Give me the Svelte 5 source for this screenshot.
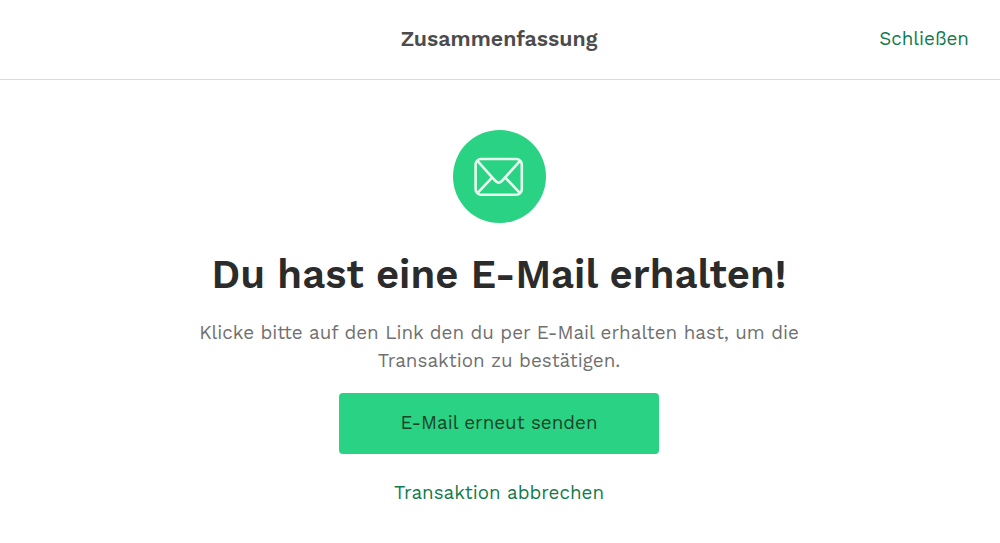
<script>
  let sent = $state(false);

  function resend() {
    sent = true;
  }
</script>

<div class="page">
  <header class="header">
    <h2 class="header-title">Zusammenfassung</h2>
    <button class="close">Schließen</button>
  </header>

  <main class="content">
    <div class="badge">
      <svg width="50" height="40" viewBox="0 0 50 40" fill="none" stroke="#e6fbef" stroke-width="2.6" stroke-linejoin="round">
        <rect x="1.6" y="2" width="46.2" height="35.8" rx="5.5" />
        <path d="M3.2 3.6 L20.9 23.4 Q24.7 27.8 28.5 23.4 L46.2 3.6" />
        <path d="M3.4 36.2 L18.3 20.4 M46 36.2 L31.1 20.4" />
      </svg>
    </div>

    <h1>Du hast eine E-Mail erhalten!</h1>

    <p>
      Klicke bitte auf den Link den du per E-Mail erhalten hast, um die<br />
      Transaktion zu bestätigen.
    </p>

    <button class="primary" onclick={resend} disabled={sent}>E-Mail erneut senden</button>
    <button class="cancel">Transaktion abbrechen</button>
  </main>
</div>

<style>
  :global(body) { background: #fff; }
  .page {
    font-family: 'Work Sans', Inter, 'Open Sans', sans-serif;
    height: 543px;
    overflow: hidden;
  }
  button {
    border: none;
    background: none;
    padding: 0;
    font-family: inherit;
    font-size: 18.8px;
    cursor: pointer;
    white-space: nowrap;
  }
  .header {
    display: grid;
    grid-template-columns: 1fr auto 1fr;
    align-items: center;
    box-sizing: border-box;
    height: 80px;
    padding: 0 31px 2px;
    border-bottom: 1px solid #dcdcdc;
  }
  .header-title {
    grid-column: 2;
    margin: 0 2px 0 0;
    font-size: 21.3px;
    font-weight: 600;
    color: #4c4c4c;
  }
  .close { justify-self: end; color: #127a4a; }
  .content {
    display: flex;
    flex-direction: column;
    align-items: center;
    padding: 50px 2px 0 0;
  }
  .badge {
    display: flex;
    align-items: center;
    justify-content: center;
    width: 93px;
    height: 93px;
    border-radius: 50%;
    background: #2ad283;
  }
  h1 {
    margin: 28px 0 0;
    font-size: 40.1px;
    line-height: 48px;
    font-weight: 600;
    color: #2b2b2b;
    white-space: nowrap;
  }
  p {
    margin: 20px 0 0;
    font-size: 18.83px;
    line-height: 27.5px;
    text-align: center;
    color: #707070;
    white-space: nowrap;
  }
  .primary {
    width: 320px;
    height: 61px;
    margin-top: 18.5px;
    border-radius: 4px;
    background: #2ad283;
    color: #1c4429;
  }
  .cancel { margin-top: 28px; color: #127a4a; }
</style>
